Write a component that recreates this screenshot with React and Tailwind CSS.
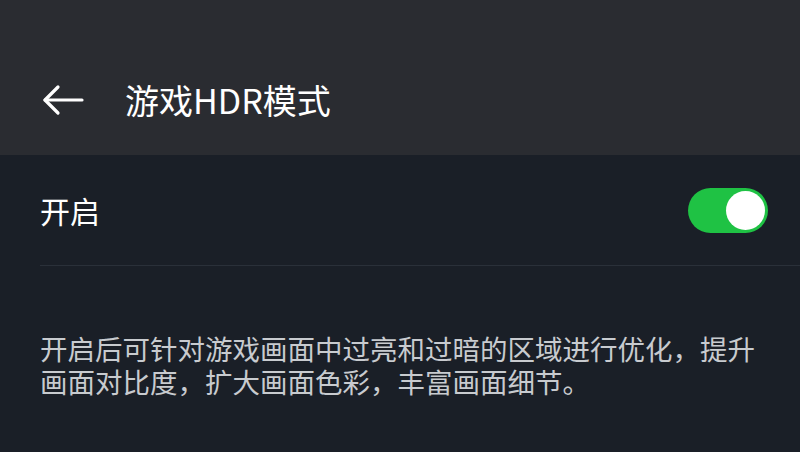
import { useState } from 'react';

const ArrowLeft = () => (
  <svg width="42" height="32" viewBox="0 0 42 32" fill="none" stroke="#ffffff" strokeWidth="3.2" strokeLinecap="round" strokeLinejoin="round">
    <path d="M40 16H3" />
    <path d="M16 3L3 16l13 13" />
  </svg>
);

export default function App() {
  const [on, setOn] = useState(true);

  return (
    <div
      className="w-[800px] h-[452px] bg-[#1a1f27] overflow-hidden flex flex-col"
      style={{ fontFamily: '"Noto Sans CJK SC", "Noto Sans", sans-serif' }}
    >
      {/* header */}
      <div className="h-[155px] bg-[#2a2c31] flex items-center pl-[42px] pt-[44px]">
        <ArrowLeft />
        <span className="ml-[41px] text-[34px] leading-none text-white">游戏HDR模式</span>
      </div>

      {/* switch row */}
      <div className="pl-[40px] flex flex-col">
        <div className="h-[110px] flex items-center justify-between pr-[32px]">
          <span className="text-[30px] leading-none text-white">开启</span>
          <button
            onClick={() => setOn(!on)}
            className={`w-[80px] h-[45px] rounded-full flex items-center px-[3px] ${on ? 'bg-[#1fc244] justify-end' : 'bg-[#4a4d53] justify-start'}`}
          >
            <span className="w-[39px] h-[39px] rounded-full bg-white block" />
          </button>
        </div>
        <div className="h-[1px] bg-[#2a3039]" />
      </div>

      {/* description */}
      <p className="px-[40px] pt-[66px] text-[27.5px] leading-[33px] text-[#c8cbcf]">
        开启后可针对游戏画面中过亮和过暗的区域进行优化，提升画面对比度，扩大画面色彩，丰富画面细节。
      </p>
    </div>
  );
}
